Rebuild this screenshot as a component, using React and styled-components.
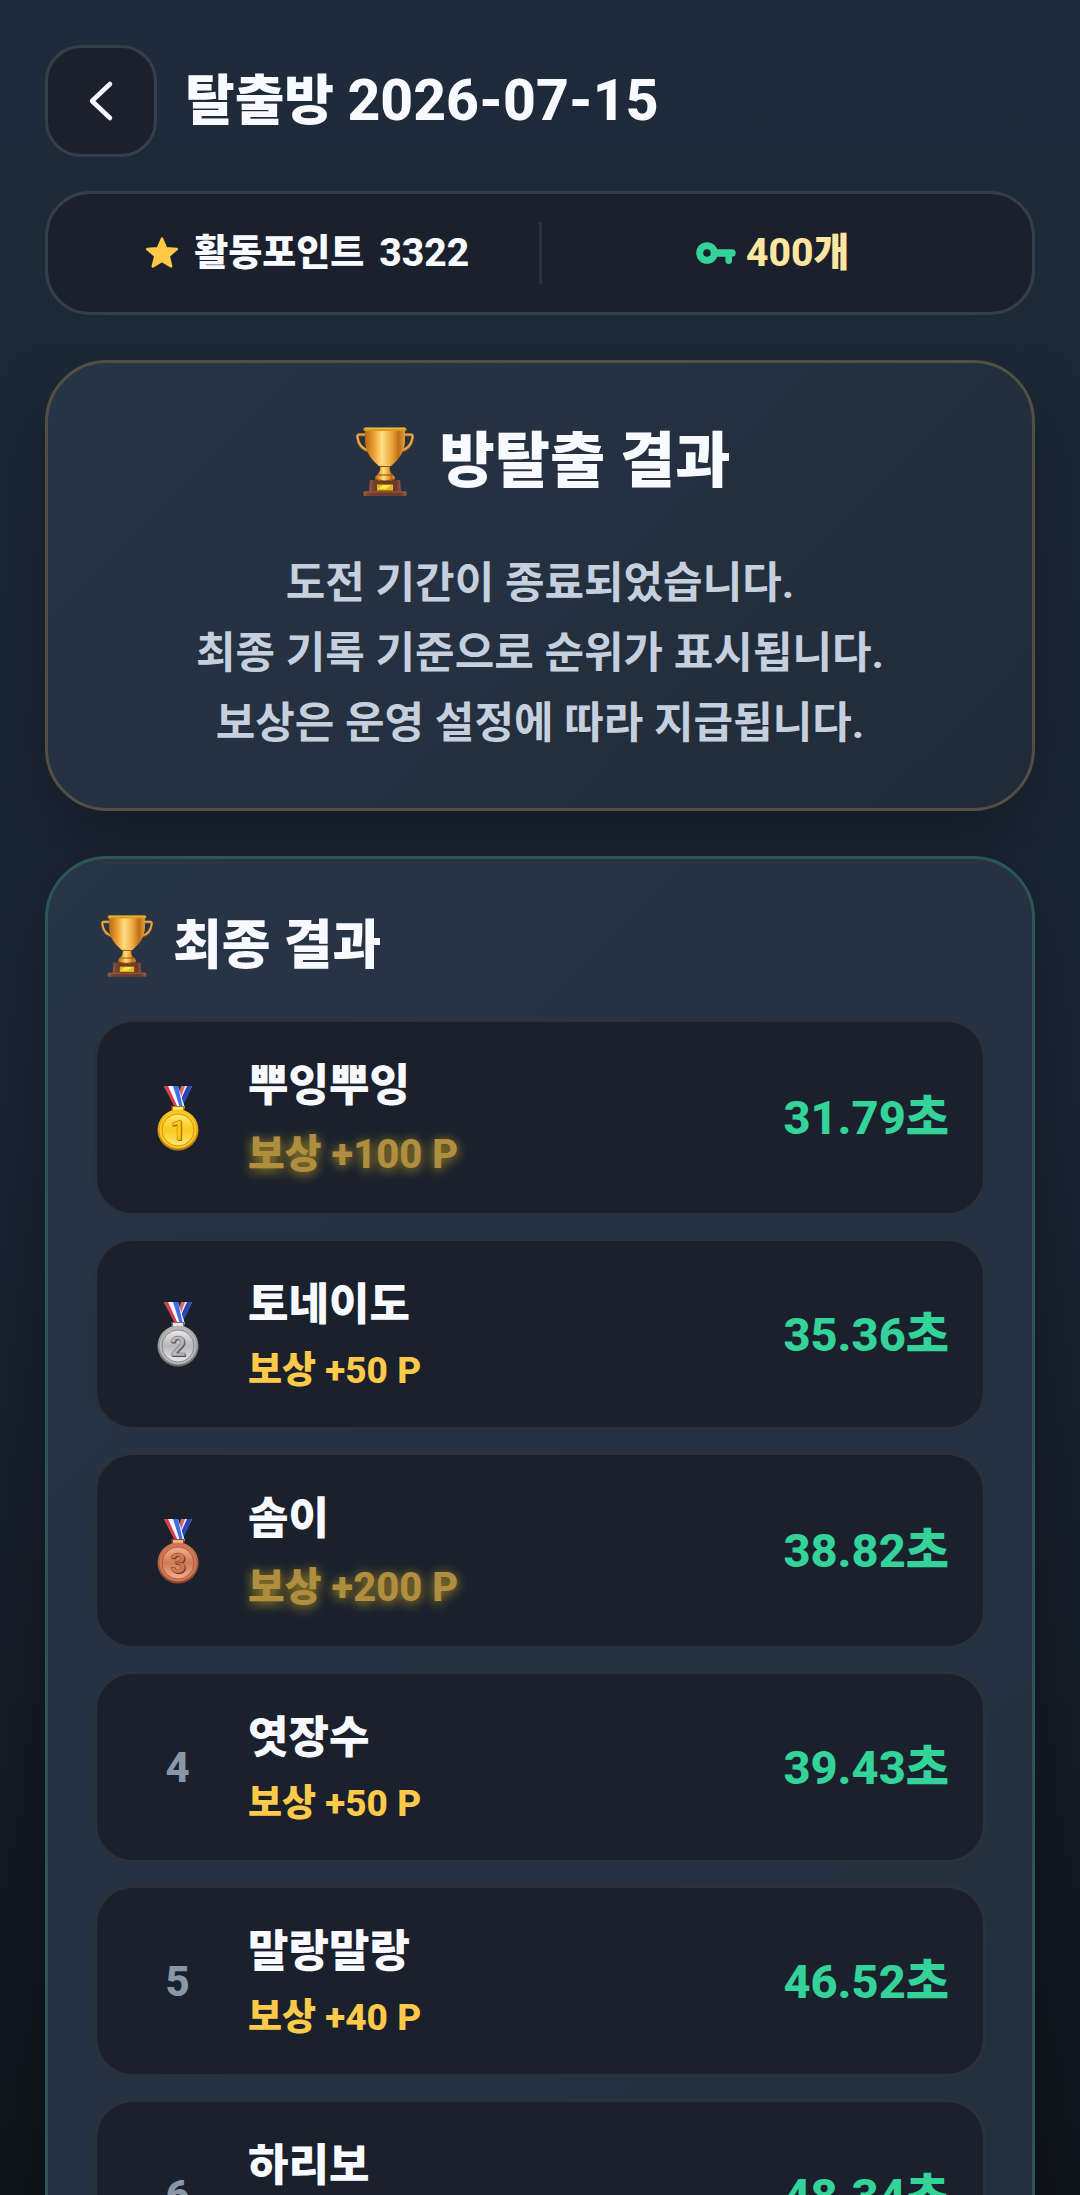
import React from "react";
import styled, { createGlobalStyle, css } from "styled-components";

const GlobalStyle = createGlobalStyle`
  * {
    box-sizing: border-box;
  }

  body {
    margin: 0;
    background: #10151d;
    color: #f8faff;
    font-family: Roboto, "Noto Sans CJK KR", sans-serif;
  }

  h1, h2, p, ol {
    margin: 0;
    padding: 0;
  }
`;

const Screen = styled.main`
  height: 100vh;
  padding: 45px;
  overflow-y: auto;
  scrollbar-width: none;
  background: linear-gradient(180deg, #1f2b3a 0%, #1a2432 50%, #10151c 100%);
`;

const Header = styled.header`
  display: flex;
  align-items: center;
  gap: 28px;
  margin-bottom: 34px;
`;

const BackButton = styled.button`
  display: grid;
  place-items: center;
  width: 112px;
  height: 112px;
  padding: 0;
  border: 3px solid #363e49;
  border-radius: 36px;
  background: #1a212d;
  color: #f8faff;
  cursor: pointer;
`;

const PageTitle = styled.h1`
  font-size: 54px;
  font-weight: 800;
  line-height: 72px;
`;

const TitleDate = styled.span`
  font-size: 57px;
`;

const StatBar = styled.section`
  display: flex;
  align-items: center;
  height: 124px;
  padding: 0 28px;
  margin-bottom: 45px;
  border: 3px solid #363e49;
  border-radius: 45px;
  background: #1a212d;
`;

const Stat = styled.div`
  display: flex;
  flex: 1;
  align-items: center;
  justify-content: center;
  gap: ${({ $gap }) => $gap}px;
  font-size: 39px;
  font-weight: 800;
  line-height: 48px;
  color: ${({ $color }) => $color || "#f8faff"};
`;

const StatLabel = styled.span`
  padding-top: 2px;
  font-size: 37px;
`;

const Divider = styled.span`
  width: 3px;
  height: 62px;
  background: #2b313d;
`;

const Card = styled.section`
  border: 3px solid ${({ $border }) => $border};
  border-radius: 62px;
  background: linear-gradient(135deg, #283547 0%, #212b38 100%);
  box-shadow: 0 28px 68px rgba(0, 0, 0, 0.28);
`;

const NoticeCard = styled(Card)`
  padding: 57px 42px 50px;
  margin-bottom: 45px;
  text-align: center;
`;

const NoticeTitle = styled.h2`
  display: flex;
  align-items: center;
  justify-content: center;
  gap: 26px;
  padding-left: 6px;
  margin-bottom: 44px;
  font-size: 60px;
  font-weight: 900;
  line-height: 84px;
`;

const NoticeText = styled.p`
  color: #c6cfde;
  font-size: 43px;
  font-weight: 700;
  line-height: 70px;
`;

const ResultCard = styled(Card)`
  padding: 46px;
  background: linear-gradient(135deg, #283547 0%, #232e3c 100%);
`;

const ResultTitle = styled.h2`
  display: flex;
  align-items: center;
  gap: 20px;
  padding-left: 7px;
  margin-bottom: 32px;
  font-size: 53px;
  font-weight: 900;
  line-height: 82px;
`;

const RankList = styled.ol`
  display: flex;
  flex-direction: column;
  gap: 22px;
  list-style: none;
`;

const RankRow = styled.li`
  display: flex;
  align-items: center;
  padding: 34px;
  border: 3px solid #2a313b;
  border-radius: 39px;
  background: #1a212d;
`;

const Rank = styled.div`
  display: grid;
  place-items: center;
  width: 93px;
  margin-right: 24px;
  color: #8a97a9;
  font-size: 42px;
  font-weight: 800;
`;

const Player = styled.div`
  flex: 1;
  min-width: 0;
`;

const Name = styled.div`
  margin-bottom: 14px;
  font-size: 44px;
  font-weight: 800;
  line-height: 60px;
`;

const Reward = styled.div`
  color: #ffc94a;
  font-size: 37px;
  font-weight: 800;
  line-height: 44px;

  ${({ $glow }) =>
    $glow &&
    css`
      font-size: 40px;
      line-height: 49px;
      opacity: 0.65;
      text-shadow: 0 2px 12px #ffc91e;
    `}
`;

const Time = styled.div`
  padding-bottom: 8px;
  color: #34d399;
  font-size: 47px;
  font-weight: 800;
`;

const MEDALS = {
  1: { light: "#ffe873", mid: "#fdc91b", dark: "#b87517", ink: "#a8680c" },
  2: { light: "#e9e9ea", mid: "#b8b8ba", dark: "#6d6d70", ink: "#55555a" },
  3: { light: "#f3b08f", mid: "#d07a55", dark: "#91452b", ink: "#7a3826" },
};

const PLAYERS = [
  { rank: 1, name: "뿌잉뿌잉", reward: 100, time: "31.79", glow: true },
  { rank: 2, name: "토네이도", reward: 50, time: "35.36" },
  { rank: 3, name: "솜이", reward: 200, time: "38.82", glow: true },
  { rank: 4, name: "엿장수", reward: 50, time: "39.43" },
  { rank: 5, name: "말랑말랑", reward: 40, time: "46.52" },
  { rank: 6, name: "하리보", reward: 30, time: "48.34" },
];

const ChevronIcon = () => (
  <svg width="26" height="42" viewBox="0 0 26 42" fill="none" aria-hidden="true">
    <path
      d="M22 4 4 21l18 17"
      stroke="currentColor"
      strokeWidth="4.5"
      strokeLinecap="round"
      strokeLinejoin="round"
    />
  </svg>
);

const StarIcon = () => (
  <svg width="34" height="34" viewBox="0 0 32 32" aria-hidden="true">
    <path
      d="M16 2.5l3.8 9 10 .8-7.600 6.500 2.400 9.700-8.600-5.200-8.600 5.200 2.400-9.700L2.200 12.300l10-.8z"
      fill="#ffca45"
      stroke="#ffca45"
      strokeWidth="2.5"
      strokeLinejoin="round"
    />
  </svg>
);

const KeyIcon = () => (
  <svg width="40" height="24" viewBox="0 0 40 24" aria-hidden="true">
    <circle cx="11" cy="12" r="7.3" fill="none" stroke="#34d399" strokeWidth="7" />
    <path
      d="M20 8.3h16a3.7 3.7 0 0 1 0 7.4v4a3.3 3.3 0 0 1-6.6 0v-4H20z"
      fill="#34d399"
    />
  </svg>
);

const Trophy = ({ id, size }) => (
  <svg width={size} height={size * 1.19} viewBox="0 0 58 69" aria-hidden="true">
    <defs>
      <linearGradient id={`${id}-cup`}>
        <stop offset="0" stopColor="#b8690f" />
        <stop offset="0.25" stopColor="#efa63a" />
        <stop offset="0.42" stopColor="#ffdf84" />
        <stop offset="0.68" stopColor="#e9a23a" />
        <stop offset="0.84" stopColor="#bd6c16" />
        <stop offset="1" stopColor="#e0a03d" />
      </linearGradient>
      <linearGradient id={`${id}-base`}>
        <stop offset="0" stopColor="#9a5c45" />
        <stop offset="0.15" stopColor="#70402f" />
        <stop offset="0.85" stopColor="#6b3a2a" />
        <stop offset="1" stopColor="#935744" />
      </linearGradient>
    </defs>
    <path
      d="M10 8H3q-2 0-1.5 3Q3 22 13 24M48 8h7q2 0 1.5 3Q55 22 45 24"
      fill="none"
      stroke="#9b5814"
      strokeWidth="3"
    />
    <path
      d="M10 7.5H3q-2 0-1.5 3Q3 21 13 23.5M48 7.5h7q2 0 1.5 3Q55 21 45 23.5"
      fill="none"
      stroke="#e6a84c"
      strokeWidth="2"
    />
    <path
      d="M9 3h40v11c0 12-8 20-14 25H23C17 34 9 26 9 14z"
      fill={`url(#${id}-cup)`}
    />
    <rect x="7.5" y="0.5" width="43" height="3.5" rx="1.5" fill="#d79c1d" />
    <path d="M9 1.300h40" stroke="#f5c846" />
    <path
      d="M24 39h10c-1 5 1 7 4 10 2 3 1 5-9 5s-11-2-9-5c3-3 5-5 4-10z"
      fill={`url(#${id}-cup)`}
    />
    <path d="M23.5 39.5h11M22 48h14M19 52.5q10 3 20 0" stroke="#8e4f0c" fill="none" />
    <path d="M24 38.3h10" stroke="#f4c968" />
    <path d="M14 53h5q10 3 20 0h5l1 12H13z" fill={`url(#${id}-base)`} />
    <rect x="7.5" y="64.5" width="43" height="4.5" rx="1" fill={`url(#${id}-base)`} />
    <path d="M8 65h42" stroke="#95604d" />
    <path d="M21 57.5h16v6H21z" fill="#e8b817" />
    <path d="M22 62l5-4h8l-5 4z" fill="#ffe34d" />
  </svg>
);

const MedalDigit = styled.text`
  font-size: 28px;
  font-weight: 700;
  text-anchor: middle;
`;

const Medal = ({ rank }) => {
  const { light, mid, dark, ink } = MEDALS[rank];

  return (
    <svg width="42" height="66" viewBox="0 0 42 66" role="img" aria-label={`${rank}위`}>
      <defs>
        <linearGradient id={`medal-${rank}`} x1="0" y1="0" x2="0" y2="1">
          <stop offset="0" stopColor={light} />
          <stop offset="0.5" stopColor={mid} />
          <stop offset="1" stopColor={light} />
        </linearGradient>
        <linearGradient id={`rim-${rank}`} x1="0" y1="0" x2="0" y2="1">
          <stop offset="0" stopColor={mid} />
          <stop offset="1" stopColor={dark} />
        </linearGradient>
      </defs>
      <path d="M24 1h11L24 23h-6z" fill="#e0646a" />
      <path d="M28 1h7L24 23h-4z" fill="#f0eef6" />
      <path d="M30 1h5L25 23h-5z" fill="#2848b8" />
      <path d="M7 1h14l7 22h-9z" fill="#f7f4fa" />
      <path d="M7 1h4l10 22h-3z" fill="#d83b4b" />
      <path d="M16 1h5l5 22h-3z" fill="#3d70e8" />
      <path d="M14.500 21h13v6h-13z" fill={dark} />
      <path d="M16 22h10v3H16z" fill={light} />
      <circle cx="21" cy="45" r="20.5" fill={`url(#rim-${rank})`} />
      <circle cx="21" cy="45" r="18.5" fill={mid} />
      <circle cx="21" cy="45" r="16" fill={`url(#medal-${rank})`} stroke={dark} strokeWidth="0.7" />
      <MedalDigit x="22" y="56" fill={ink}>
        {rank}
      </MedalDigit>
      <MedalDigit x="21" y="55" fill={mid} stroke={ink} strokeWidth="0.4">
        {rank}
      </MedalDigit>
    </svg>
  );
};

const PlayerRow = ({ rank, name, reward, time, glow }) => (
  <RankRow>
    <Rank>{MEDALS[rank] ? <Medal rank={rank} /> : rank}</Rank>
    <Player>
      <Name>{name}</Name>
      <Reward $glow={glow}>보상 +{reward} P</Reward>
    </Player>
    <Time>{time}초</Time>
  </RankRow>
);

const App = () => (
  <>
    <GlobalStyle />
    <Screen>
      <Header>
        <BackButton type="button" aria-label="뒤로">
          <ChevronIcon />
        </BackButton>
        <PageTitle>
          탈출방 <TitleDate>2026-07-15</TitleDate>
        </PageTitle>
      </Header>

      <StatBar>
        <Stat $gap={15}>
          <StarIcon />
          <StatLabel>활동포인트</StatLabel>
          <span>3322</span>
        </Stat>
        <Divider />
        <Stat $gap={10} $color="#ffe6a0">
          <KeyIcon />
          <span>400개</span>
        </Stat>
      </StatBar>

      <NoticeCard $border="#535043">
        <NoticeTitle>
          <Trophy id="notice" size={58} />
          방탈출 결과
        </NoticeTitle>
        <NoticeText>
          도전 기간이 종료되었습니다.
          <br />
          최종 기록 기준으로 순위가 표시됩니다.
          <br />
          보상은 운영 설정에 따라 지급됩니다.
        </NoticeText>
      </NoticeCard>

      <ResultCard $border="#2c5656">
        <ResultTitle>
          <Trophy id="result" size={52} />
          최종 결과
        </ResultTitle>
        <RankList>
          {PLAYERS.map((player) => (
            <PlayerRow key={player.rank} {...player} />
          ))}
        </RankList>
      </ResultCard>
    </Screen>
  </>
);

export default App;
